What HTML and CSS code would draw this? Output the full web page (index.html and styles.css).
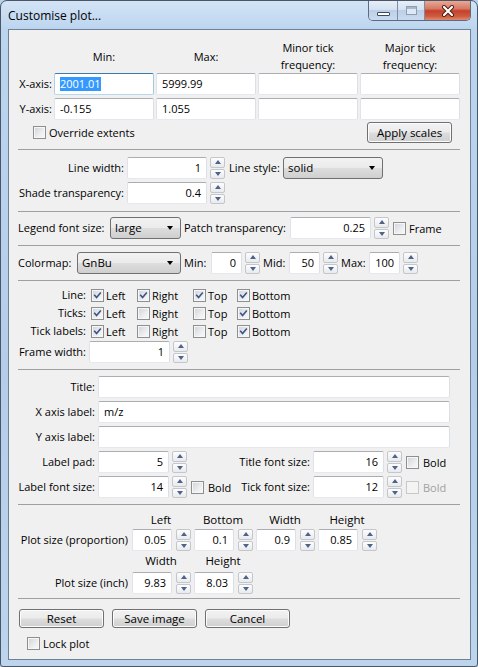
FILE: index.html
```html
<!DOCTYPE html>
<html lang="en">
<head>
<meta charset="utf-8">
<title>Customise plot...</title>
<link rel="stylesheet" href="styles.css">
</head>
<body>
<div class="window">
  <div class="titlebar">
    <span class="title">Customise plot...</span>
    <div class="caps">
      <div class="cap cap-min"><span class="g-min"></span></div>
      <div class="cap cap-max"><span class="g-max"></span></div>
      <div class="cap cap-close">
        <svg width="14" height="12" viewBox="0 0 14 12"><path d="M3 2 L11 10 M11 2 L3 10" stroke="#4a1c12" stroke-width="4" stroke-linecap="round"/><path d="M3 2 L11 10 M11 2 L3 10" stroke="#ffffff" stroke-width="2.2" stroke-linecap="round"/></svg>
      </div>
    </div>
  </div>
  <div class="client">
    <div class="sec s1">
      <div class="axhdr">
        <span></span>
        <div>Min:</div>
        <div>Max:</div>
        <div>Minor tick<br>frequency:</div>
        <div>Major tick<br>frequency:</div>
      </div>
      <div class="axgrid">
        <div class="lbl">X-axis:</div>
        <div class="inp focus"><span class="sel">2001.01</span></div>
        <div class="inp">5999.99</div>
        <div class="inp"></div>
        <div class="inp"></div>
        <div class="lbl">Y-axis:</div>
        <div class="inp">-0.155</div>
        <div class="inp">1.055</div>
        <div class="inp"></div>
        <div class="inp"></div>
      </div>
      <div class="ovr">
        <div class="chk"><span class="box"></span><span>Override extents</span></div>
        <div class="btn apply">Apply scales</div>
      </div>
    </div>
    <div class="sep"></div>

    <div class="sec s2">
      <div class="lwrow">
        <div class="lbl">Line width:</div>
        <div class="inp num">1</div>
        <div class="spin"><span class="up"></span><span class="dn"></span></div>
        <div class="txt">Line style:</div>
        <div class="combo"><span>solid</span><i class="arr"></i></div>
      </div>
      <div class="lwrow">
        <div class="lbl">Shade transparency:</div>
        <div class="inp num">0.4</div>
        <div class="spin"><span class="up"></span><span class="dn"></span></div>
      </div>
    </div>
    <div class="sep"></div>

    <div class="sec s3">
      <div class="legrow">
        <div class="lbl">Legend font size:</div>
        <div class="combo"><span>large</span><i class="arr"></i></div>
        <div class="txt">Patch transparency:</div>
        <div class="inp num">0.25</div>
        <div class="spin"><span class="up"></span><span class="dn"></span></div>
        <div class="chk"><span class="box"></span><span>Frame</span></div>
      </div>
    </div>
    <div class="sep"></div>

    <div class="sec s4">
      <div class="cmrow">
        <div class="txt">Colormap:</div>
        <div class="combo"><span>GnBu</span><i class="arr"></i></div>
        <div class="txt">Min:</div>
        <div class="inp num">0</div>
        <div class="spin"><span class="up"></span><span class="dn"></span></div>
        <div class="txt">Mid:</div>
        <div class="inp num">50</div>
        <div class="spin"><span class="up"></span><span class="dn"></span></div>
        <div class="txt">Max:</div>
        <div class="inp num">100</div>
        <div class="spin"><span class="up"></span><span class="dn"></span></div>
      </div>
    </div>
    <div class="sep"></div>

    <div class="sec s5">
      <div class="cbgrid">
        <div class="lbl">Line:</div>
        <div class="chk"><span class="box on"><svg viewBox="0 0 13 13"><path d="M3.2 6.4 L5.4 8.8 L9.8 3.6"/></svg></span><span>Left</span></div>
        <div class="chk"><span class="box on"><svg viewBox="0 0 13 13"><path d="M3.2 6.4 L5.4 8.8 L9.8 3.6"/></svg></span><span>Right</span></div>
        <div class="chk"><span class="box on"><svg viewBox="0 0 13 13"><path d="M3.2 6.4 L5.4 8.8 L9.8 3.6"/></svg></span><span>Top</span></div>
        <div class="chk"><span class="box on"><svg viewBox="0 0 13 13"><path d="M3.2 6.4 L5.4 8.8 L9.8 3.6"/></svg></span><span>Bottom</span></div>

        <div class="lbl">Ticks:</div>
        <div class="chk"><span class="box on"><svg viewBox="0 0 13 13"><path d="M3.2 6.4 L5.4 8.8 L9.8 3.6"/></svg></span><span>Left</span></div>
        <div class="chk"><span class="box"></span><span>Right</span></div>
        <div class="chk"><span class="box"></span><span>Top</span></div>
        <div class="chk"><span class="box on"><svg viewBox="0 0 13 13"><path d="M3.2 6.4 L5.4 8.8 L9.8 3.6"/></svg></span><span>Bottom</span></div>

        <div class="lbl">Tick labels:</div>
        <div class="chk"><span class="box on"><svg viewBox="0 0 13 13"><path d="M3.2 6.4 L5.4 8.8 L9.8 3.6"/></svg></span><span>Left</span></div>
        <div class="chk"><span class="box"></span><span>Right</span></div>
        <div class="chk"><span class="box"></span><span>Top</span></div>
        <div class="chk"><span class="box on"><svg viewBox="0 0 13 13"><path d="M3.2 6.4 L5.4 8.8 L9.8 3.6"/></svg></span><span>Bottom</span></div>
      </div>
      <div class="fwrow">
        <div class="lbl">Frame width:</div>
        <div class="inp num">1</div>
        <div class="spin"><span class="up"></span><span class="dn"></span></div>
      </div>
    </div>
    <div class="sep"></div>

    <div class="sec s6">
      <div class="trow">
        <div class="lbl">Title:</div>
        <div class="inp"></div>
      </div>
      <div class="trow">
        <div class="lbl">X axis label:</div>
        <div class="inp">m/z</div>
      </div>
      <div class="trow">
        <div class="lbl">Y axis label:</div>
        <div class="inp"></div>
      </div>
      <div class="frow">
        <div class="lbl">Label pad:</div>
        <div class="inp num">5</div>
        <div class="spin"><span class="up"></span><span class="dn"></span></div>
        <div></div>
        <div class="lbl">Title font size:</div>
        <div class="inp num">16</div>
        <div class="spin"><span class="up"></span><span class="dn"></span></div>
        <div class="chk"><span class="box"></span><span>Bold</span></div>
      </div>
      <div class="frow">
        <div class="lbl">Label font size:</div>
        <div class="inp num">14</div>
        <div class="spin"><span class="up"></span><span class="dn"></span></div>
        <div class="chk"><span class="box"></span><span>Bold</span></div>
        <div class="lbl">Tick font size:</div>
        <div class="inp num">12</div>
        <div class="spin"><span class="up"></span><span class="dn"></span></div>
        <div class="chk disabled"><span class="box"></span><span>Bold</span></div>
      </div>
    </div>
    <div class="sep"></div>

    <div class="sec s7">
      <div></div>
      <div class="colhdr">Left</div>
      <div class="colhdr">Bottom</div>
      <div class="colhdr">Width</div>
      <div class="colhdr">Height</div>

      <div class="lbl">Plot size (proportion)</div>
      <div class="inp num">0.05</div>
      <div class="spin"><span class="up"></span><span class="dn"></span></div>
      <div class="inp num">0.1</div>
      <div class="spin"><span class="up"></span><span class="dn"></span></div>
      <div class="inp num">0.9</div>
      <div class="spin"><span class="up"></span><span class="dn"></span></div>
      <div class="inp num">0.85</div>
      <div class="spin"><span class="up"></span><span class="dn"></span></div>

      <div></div>
      <div class="colhdr">Width</div>
      <div class="colhdr">Height</div>
      <div class="fill"></div>

      <div class="lbl">Plot size (inch)</div>
      <div class="inp num">9.83</div>
      <div class="spin"><span class="up"></span><span class="dn"></span></div>
      <div class="inp num">8.03</div>
      <div class="spin"><span class="up"></span><span class="dn"></span></div>
    </div>
    <div class="sep"></div>

    <div class="sec s8">
      <div class="btnrow">
        <div class="btn">Reset</div>
        <div class="btn">Save image</div>
        <div class="btn">Cancel</div>
      </div>
      <div class="lockrow">
        <div class="chk"><span class="box"></span><span>Lock plot</span></div>
      </div>
    </div>
  </div>
</div>
</body>
</html>
```

FILE: styles.css
```css
* { box-sizing: border-box; margin: 0; padding: 0; }
html, body { width: 478px; height: 667px; overflow: hidden; }
body {
  font-family: "Open Sans", "Noto Sans", sans-serif;
  font-size: 11px;
  color: #000;
  background: #b9d1ea;
}

/* window frame */
.window {
  width: 478px;
  height: 667px;
  border: 1px solid #4a5566;
  border-radius: 7px 7px 3px 3px;
  background: linear-gradient(180deg, #d3e4f6 0, #bcd5ef 28px, #b5cde9 55%, #bdd4ed 100%);
  padding: 0 6px 6px 7px;
  display: flex;
  flex-direction: column;
}
.titlebar {
  height: 28px;
  flex: none;
  display: flex;
  align-items: flex-start;
}
.title {
  margin-top: 7px;
  line-height: 16px;
  font-size: 12px;
}
.caps {
  margin-left: auto;
  display: flex;
  height: 20px;
  border: 1px solid #5d6b7f;
  border-top: none;
  border-radius: 0 0 5px 5px;
  overflow: hidden;
}
.cap {
  height: 19px;
  display: flex;
  align-items: center;
  justify-content: center;
}
.cap-min, .cap-max {
  background: linear-gradient(180deg, #e6eef8 0, #d5e2f1 45%, #bccfe6 50%, #c9dbef 100%);
  border-right: 1px solid #7d8ca0;
}
.cap-min { width: 29px; }
.cap-max { width: 27px; }
.cap-close {
  width: 45px;
  background: linear-gradient(180deg, #e9a898 0, #d67a64 40%, #c4412a 52%, #cf5a3e 80%, #e08a6e 100%);
}
.g-min {
  width: 13px;
  height: 4px;
  margin-top: 7px;
  background: #fff;
  border: 1px solid #3e4a5c;
  border-radius: 1px;
}
.g-max {
  width: 11px;
  height: 9px;
  border: 1px solid #8d9db2;
  background: #dfe8f3;
  box-shadow: inset 0 2px 0 #a9b8cc;
}

/* client area */
.client {
  flex: 1;
  border: 1px solid #6f8098;
  background: #f0f0f0;
  display: flex;
  flex-direction: column;
}
.sep {
  flex: none;
  height: 1px;
  background: #a0a0a0;
  margin: 0 10px 0 9px;
}
.sec { flex: none; padding-left: 9px; }

.lbl { text-align: right; white-space: nowrap; line-height: 22px; }
.txt { white-space: nowrap; line-height: 22px; }

.inp {
  height: 22px;
  background: #fff;
  border: 1px solid;
  border-color: #abadb3 #dbdfe6 #e3e9ef #e2e3ea;
  border-radius: 2px;
  padding: 0 5px;
  line-height: 20px;
  white-space: nowrap;
  overflow: hidden;
}
.inp.num { text-align: right; }
.inp.focus { border-color: #3d7bad #a4c9e3 #b7d9ed #b5cfe7; }
.sel { background: #3399ff; color: #fff; display: inline-block; line-height: 14px; }

.spin {
  width: 15px;
  height: 22px;
  display: flex;
  flex-direction: column;
  gap: 1px;
}
.spin span {
  flex: 1;
  border: 1px solid #c3c6cc;
  border-radius: 2px;
  background: linear-gradient(180deg, #fdfdfd, #e9eaec);
  display: flex;
  align-items: center;
  justify-content: center;
}
.spin .up::after, .spin .dn::after {
  content: "";
  width: 0;
  height: 0;
  border-left: 3.5px solid transparent;
  border-right: 3.5px solid transparent;
}
.spin .up::after { border-bottom: 4px solid #4e628a; }
.spin .dn::after { border-top: 4px solid #4e628a; }

.combo {
  height: 22px;
  border: 1px solid #707070;
  border-radius: 3px;
  background: linear-gradient(180deg, #f2f2f2 0, #ebebeb 48%, #dddddd 52%, #cfcfcf 100%);
  display: flex;
  align-items: center;
  padding: 0 7px 0 4px;
  white-space: nowrap;
}
.combo span { flex: 1; line-height: 20px; font-size: 11.5px; }
.arr {
  width: 0;
  height: 0;
  border-left: 3.5px solid transparent;
  border-right: 3.5px solid transparent;
  border-top: 4px solid #000;
}

.btn {
  height: 21px;
  border: 1px solid #707070;
  border-radius: 3px;
  background: linear-gradient(180deg, #f2f2f2 0, #ebebeb 48%, #dddddd 52%, #cfcfcf 100%);
  box-shadow: inset 0 0 0 1px #fcfcfc;
  display: flex;
  align-items: center;
  justify-content: center;
  white-space: nowrap;
  font-size: 11.5px;
}

.chk {
  display: flex;
  align-items: center;
  gap: 3px;
  white-space: nowrap;
}
.box {
  width: 13px;
  height: 13px;
  flex: none;
  border: 1px solid #8e8f8f;
  background: linear-gradient(135deg, #cfd3d8 0, #eceef0 60%, #f9f9f9 100%);
  box-shadow: inset 0 0 0 1px #f6f6f6;
  display: flex;
}
.box svg { width: 11px; height: 11px; }
.box svg path {
  fill: none;
  stroke: #3f5488;
  stroke-width: 1.9;
  stroke-linecap: square;
}
.chk.disabled { color: #a0a0a0; }
.chk.disabled .box { border-color: #c8c8c8; background: #f4f4f4; box-shadow: none; }

/* section 1 */
.s1 { height: 119px; padding-top: 9px; padding-left: 0; }
.axhdr, .axgrid {
  display: grid;
  grid-template-columns: 43px repeat(4, 100px);
  column-gap: 2px;
}
.axhdr { height: 34px; align-items: center; }
.axhdr div { text-align: center; line-height: 17px; }
.axgrid { row-gap: 3px; grid-auto-rows: 22px; }
.ovr {
  margin-top: 2px;
  height: 21px;
  display: flex;
  align-items: center;
  padding-left: 24px;
  padding-right: 18px;
}
.apply { width: 85px; margin-left: auto; }

/* section 2 */
.s2 { height: 61px; padding-top: 7px; display: flex; flex-direction: column; gap: 3px; }
.lwrow {
  display: grid;
  grid-template-columns: 106px 80px 15px 52px 100px;
  column-gap: 3px;
  height: 22px;
}
.lwrow .txt { padding-left: 1px; }

/* section 3 */
.s3 { height: 33px; padding-top: 5px; }
.legrow {
  display: grid;
  grid-template-columns: 89px 71px 103px 81px 15px auto;
  column-gap: 3px;
  height: 22px;
}
.legrow .lbl { text-align: left; }
.legrow .chk { margin-left: 1px; }

/* section 4 */
.s4 { height: 34px; padding-top: 6px; }
.cmrow {
  display: grid;
  grid-template-columns: 56px 104px 24px 31px 15px 23px 31px 15px 25px 31px 15px;
  column-gap: 3px;
  height: 22px;
}

/* section 5 */
.s5 { height: 88px; padding-top: 5px; }
.cbgrid {
  display: grid;
  grid-template-columns: 73px 46px 56px 44px auto;
  grid-auto-rows: 18px;
}
.cbgrid .lbl { line-height: 18px; padding-right: 5px; }
.cbgrid .chk { gap: 2px; }
.fwrow {
  margin-top: 1px;
  display: grid;
  grid-template-columns: 68px 81px 15px;
  column-gap: 3px;
  height: 22px;
}

/* section 6 */
.s6 { height: 134px; padding-top: 6px; display: flex; flex-direction: column; gap: 3px; }
.trow {
  display: grid;
  grid-template-columns: 77px 352px;
  column-gap: 3px;
  height: 22px;
}
.frow {
  display: grid;
  grid-template-columns: 77px 71px 15px 44px 73px 71px 15px auto;
  column-gap: 3px;
  height: 22px;
}
.frow .chk { margin-left: 1px; gap: 4px; }

/* section 7 */
.s7 {
  height: 93px;
  padding-top: 7px;
  display: grid;
  grid-template-columns: 110px repeat(4, 40px 14px);
  grid-template-rows: 15px 22px 17px 22px;
  column-gap: 4px;
  row-gap: 2px;
}
.colhdr { grid-column: span 2; text-align: center; line-height: 15px; font-size: 11.5px; }
.s7 .fill { grid-column: span 4; }

/* section 8 */
.s8 { flex: 1; padding-top: 10px; padding-left: 10px; }
.btnrow { display: flex; gap: 8px; }
.btnrow .btn { width: 85px; height: 19px; }
.lockrow { margin-top: 7px; height: 16px; display: flex; align-items: center; padding-left: 8px; }
```
